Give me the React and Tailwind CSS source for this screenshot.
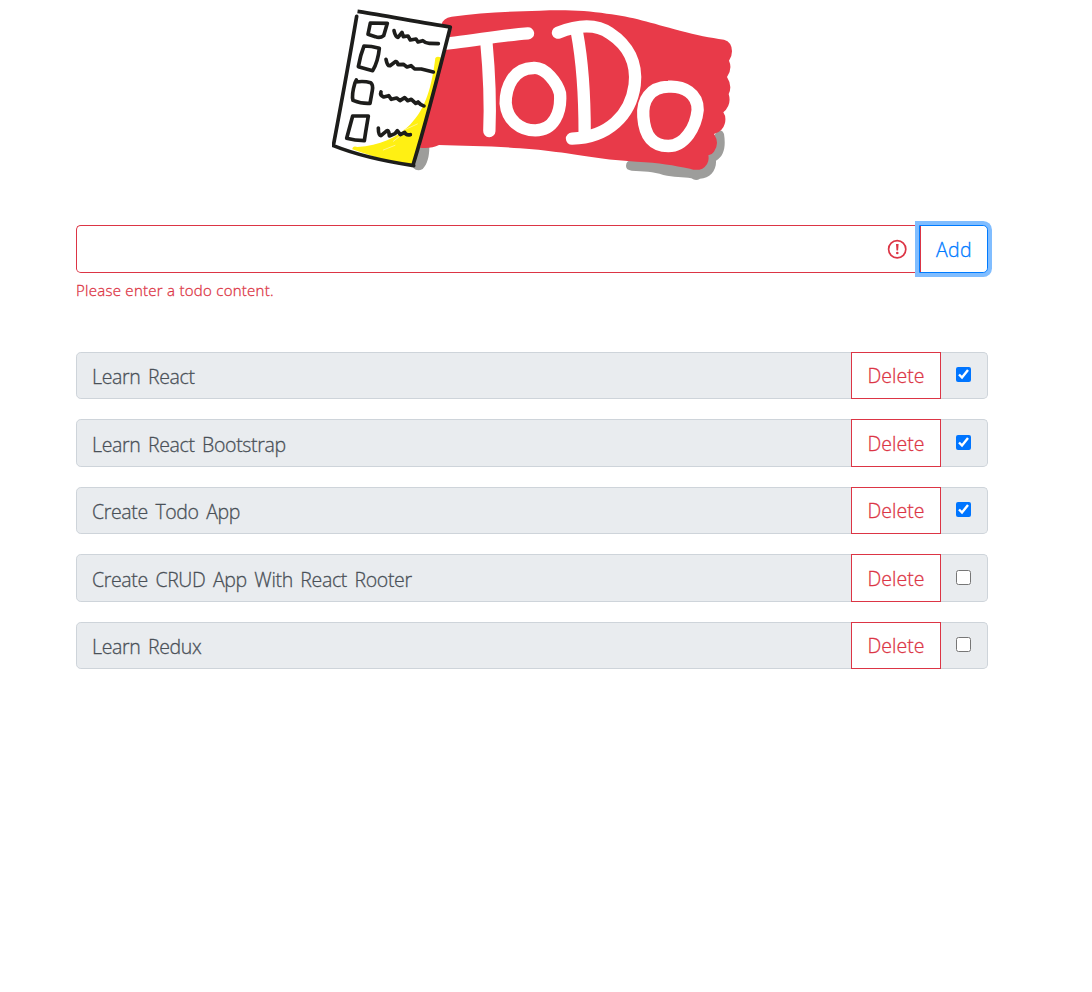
import React from "react";

const todos = [
  { text: "Learn React", done: true },
  { text: "Learn React Bootstrap", done: true },
  { text: "Create Todo App", done: true },
  { text: "Create CRUD App With React Rooter", done: false },
  { text: "Learn Redux", done: false },
];

function Logo() {
  return (
    <svg className="block h-[172px] w-[400px]" viewBox="36 27 1200 516" role="img" aria-label="ToDo">
      <path
        fill="#9d9d9b"
        d="M285 440 L328 440 C328 470 322 492 308 507 Q292 516 280 504 Z M918 498 Q918 482 936 480 L1130 480 L1190 396 Q1205 385 1212 402 C1218 440 1212 468 1188 482 C1190 510 1170 536 1140 536 Q1128 544 1114 535 C1090 530 1060 532 1030 525 C1000 514 970 514 935 512 Q918 510 918 498 Z"
      />
      <path
        fill="#e83a49"
        d="M366 72 Q368 55 395 50 C480 38 560 35 660 32 C740 29 800 32 860 41 C940 50 990 68 1080 92 C1130 105 1170 113 1212 119 Q1236 126 1236 154 Q1236 170 1227 182 Q1238 206 1221 231 Q1238 258 1226 282 Q1236 314 1210 337 Q1220 352 1214 372 Q1208 395 1182 402 Q1200 430 1182 455 Q1176 464 1165 466 Q1170 492 1147 506 Q1130 513 1110 506 C1060 496 1020 488 950 485 C880 482 800 470 740 460 C700 455 650 448 600 445 C520 438 430 437 357 435 Q335 446 300 443 L340 200 Z"
      />
      <g fill="none" stroke="#fff" strokeWidth="37" strokeLinecap="round" strokeLinejoin="round">
        <path d="M378 131 L405 128 C480 119 545 106 624 100" />
        <path d="M499 125 C507 210 512 300 508 393" />
        <path d="M640 204 C580 205 557 260 557 310 C562 362 602 391 646 391 C700 391 725 340 720 280 C712 250 676 200 640 204 Z" />
        <path d="M714 98 C780 72 830 72 870 100 C925 136 952 190 944 255 C932 345 865 413 756 416" />
        <path d="M771 98 C790 200 794 300 794 400" />
        <path d="M1045 260 C990 262 966 300 970 350 C974 410 1000 438 1045 438 C1095 438 1128 380 1133 330 C1134 280 1090 257 1045 260 Z" />
      </g>
      <path fill="#fff" d="M110 35 L395 82 L280 496 L40 438 Z" />
      <path fill="#fff013" d="M346 174 Q352 167 361 172 L368 180 L280 494 C220 490 160 470 97 448 Q98 436 112 441 C180 436 230 414 270 374 C318 325 335 260 346 174 Z" />
      <path fill="none" stroke="#fff48a" strokeWidth="3" strokeLinecap="round" d="M220 424 L248 402 M190 450 L225 436 M252 390 L292 372" />
      <g fill="none" stroke="#1d1d1b" strokeWidth="11" strokeLinecap="round" strokeLinejoin="round">
        <path strokeLinecap="square" d="M118 35 C200 47 310 70 391 81 C356 220 320 360 280 492" />
        <path d="M110 49 C88 180 62 320 40 437 C120 469 200 485 281 497" />
        <path d="M151 69 L202 70 L191 107 Q180 116 166 110 L144 103 Z" />
        <path d="M132 138 Q154 138 178 145 Q174 185 158 212 L115 200 Q121 165 132 138 Z" />
        <path d="M109 240 L106 246 Q132 242 152 248 Q160 255 157 271 L150 310 Q127 312 99 301 Q94 285 105 248" />
        <path d="M80 415 L98 348 L145 348 L137 396 L133 422 Q104 422 80 415 Z" />
        <path d="M222 92 Q226 111 234 112 L246 97 L250 110 L264 108 L271 120 L288 117 L294 126 L308 122 Q318 131 330 130 L355 131" />
        <path d="M198 178 Q202 199 210 197 L226 185 Q232 184 234 194 L250 193 L261 201 L273 197 L284 207 L304 207 Q320 211 340 216" />
        <path d="M183 276 Q179 286 191 291 L206 287 L214 298 L230 294 L240 302 L254 293 L263 302 L274 298 L287 310 L294 306 Q302 316 312 318" />
        <path d="M175 384 Q175 406 183 407 L201 392 Q207 390 208 408 L225 401 L232 392 L241 404 L254 397 Q258 407 271 404" />
      </g>
    </svg>
  );
}

function TodoRow({ text, done }) {
  return (
    <li className="mb-5 flex h-[47.5px]">
      <div className="flex grow items-center rounded-l-[4.8px] border border-[#ced4da] bg-[#e9ecef] pl-[15px] pt-[2.4px] text-[19.5px] tracking-[-0.35px] text-[#495057] [word-spacing:2.8px]">
        {text}
      </div>
      <button className="relative z-10 -ml-px w-[90px] border border-[#dc3545] bg-white pt-px text-[19.5px] text-[#dc3545]">
        Delete
      </button>
      <label className="-ml-px flex w-12 items-start rounded-r-[4.8px] border border-l-0 border-[#ced4da] bg-[#e9ecef] pl-4 pt-[14.25px]">
        <input type="checkbox" defaultChecked={done} className="m-0 size-[15px]" />
      </label>
    </li>
  );
}

export default function App() {
  return (
    <main className="min-h-[992px] bg-white pl-[76px] pt-[9px] font-['Open_Sans','Noto_Sans',sans-serif] font-light [-webkit-text-stroke:0.3px]">
      <div className="w-[912px]">
        <header className="flex justify-center">
          <Logo />
        </header>
        <form className="mt-11 flex h-12" onSubmit={(e) => e.preventDefault()}>
          <div className="flex grow items-center rounded-l-[4.8px] border border-r-0 border-[#dc3545] pr-3">
            <input aria-label="Todo" className="h-full min-w-0 grow bg-transparent px-4 text-xl outline-none" />
            <svg className="size-5" viewBox="0 0 20 20" fill="none" stroke="#dc3545">
              <circle cx="10.2" cy="10.3" r="8.6" strokeWidth="1.7" />
              <path d="M9 5h2.6l-.5 6.4H9.5z" fill="#dc3545" stroke="none" />
              <circle cx="10.3" cy="14" r="1.3" fill="#dc3545" stroke="none" />
            </svg>
          </div>
          <button className="flex w-[69px] rounded-r-[4.8px] border border-[#007bff] bg-white text-[19.5px] tracking-[0.3px] text-[#007bff] shadow-[0_0_0_4px_#80bdff]">
            <span className="flex h-full w-full items-center justify-center border-l border-[#dc3545] pt-[2px]">Add</span>
          </button>
        </form>
        <p className="mt-[6px] h-[22px] text-[15px] leading-[22px] tracking-[0.27px] text-[#dc3545]">Please enter a todo content.</p>
        <ul className="mt-[50.8px]">
          {todos.map((todo) => (
            <TodoRow key={todo.text} {...todo} />
          ))}
        </ul>
      </div>
    </main>
  );
}
